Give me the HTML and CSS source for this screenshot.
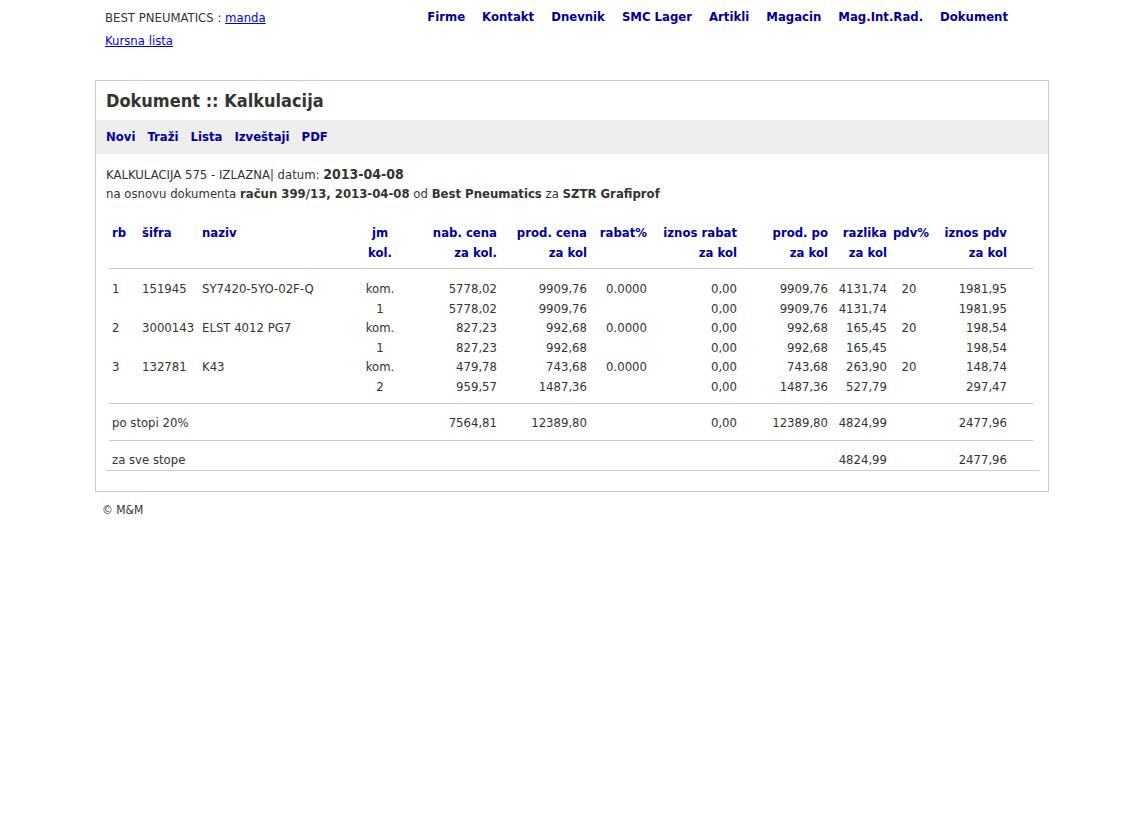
FILE: index.html
```html
<!DOCTYPE html>
<html lang="sr">
<head>
    <meta charset="UTF-8">
    <title>Dokument :: Kalkulacija</title>
    <link rel="stylesheet" href="styles.css">
</head>
<body>
    <div class="wrap">
        <header class="top">
            <div class="user">
                BEST PNEUMATICS : <a href="#">manda</a><br>
                <a href="#" class="kurs">Kursna lista</a>
            </div>
            <nav class="menu">
                <a href="#">Firme</a>
                <a href="#">Kontakt</a>
                <a href="#">Dnevnik</a>
                <a href="#">SMC Lager</a>
                <a href="#">Artikli</a>
                <a href="#">Magacin</a>
                <a href="#">Mag.Int.Rad.</a>
                <a href="#">Dokument</a>
            </nav>
        </header>

        <div class="box">
            <h1>Dokument :: Kalkulacija</h1>
            <div class="toolbar">
                <a href="#">Novi</a>
                <a href="#">Traži</a>
                <a href="#">Lista</a>
                <a href="#">Izveštaji</a>
                <a href="#">PDF</a>
            </div>

            <div class="info">
                KALKULACIJA 575 - IZLAZNA| datum: <b class="date">2013-04-08</b><br>
                na osnovu dokumenta <b>račun 399/13, 2013-04-08</b> od <b>Best Pneumatics</b> za <b>SZTR Grafiprof</b>
            </div>

            <table class="calc">
                <colgroup>
                    <col style="width:33px"><col style="width:60px"><col style="width:141px">
                    <col style="width:80px"><col style="width:80px"><col style="width:90px">
                    <col style="width:60px"><col style="width:90px"><col style="width:91px">
                    <col style="width:59px"><col style="width:38px"><col style="width:82px">
                    <col>
                </colgroup>
                <tr class="head">
                    <th>rb</th><th>šifra</th><th>naziv</th>
                    <th class="c">jm</th><th class="r">nab. cena</th><th class="r">prod. cena</th>
                    <th class="r">rabat%</th><th class="r">iznos rabat</th><th class="r">prod. po</th>
                    <th class="r">razlika</th><th class="c">pdv%</th><th class="r">iznos pdv</th><th></th>
                </tr>
                <tr class="head">
                    <th></th><th></th><th></th>
                    <th class="c">kol.</th><th class="r">za kol.</th><th class="r">za kol</th>
                    <th></th><th class="r">za kol</th><th class="r">za kol</th>
                    <th class="r">za kol</th><th></th><th class="r">za kol</th><th></th>
                </tr>
                <tr class="sep first"><td colspan="13"><div></div></td></tr>

                <tr>
                    <td>1</td><td>151945</td><td>SY7420-5YO-02F-Q</td>
                    <td class="c">kom.</td><td class="r">5778,02</td><td class="r">9909,76</td>
                    <td class="r">0.0000</td><td class="r">0,00</td><td class="r">9909,76</td>
                    <td class="r">4131,74</td><td class="c">20</td><td class="r">1981,95</td><td></td>
                </tr>
                <tr>
                    <td></td><td></td><td></td>
                    <td class="c">1</td><td class="r">5778,02</td><td class="r">9909,76</td>
                    <td></td><td class="r">0,00</td><td class="r">9909,76</td>
                    <td class="r">4131,74</td><td></td><td class="r">1981,95</td><td></td>
                </tr>
                <tr>
                    <td>2</td><td>3000143</td><td>ELST 4012 PG7</td>
                    <td class="c">kom.</td><td class="r">827,23</td><td class="r">992,68</td>
                    <td class="r">0.0000</td><td class="r">0,00</td><td class="r">992,68</td>
                    <td class="r">165,45</td><td class="c">20</td><td class="r">198,54</td><td></td>
                </tr>
                <tr>
                    <td></td><td></td><td></td>
                    <td class="c">1</td><td class="r">827,23</td><td class="r">992,68</td>
                    <td></td><td class="r">0,00</td><td class="r">992,68</td>
                    <td class="r">165,45</td><td></td><td class="r">198,54</td><td></td>
                </tr>
                <tr>
                    <td>3</td><td>132781</td><td>K43</td>
                    <td class="c">kom.</td><td class="r">479,78</td><td class="r">743,68</td>
                    <td class="r">0.0000</td><td class="r">0,00</td><td class="r">743,68</td>
                    <td class="r">263,90</td><td class="c">20</td><td class="r">148,74</td><td></td>
                </tr>
                <tr>
                    <td></td><td></td><td></td>
                    <td class="c">2</td><td class="r">959,57</td><td class="r">1487,36</td>
                    <td></td><td class="r">0,00</td><td class="r">1487,36</td>
                    <td class="r">527,79</td><td></td><td class="r">297,47</td><td></td>
                </tr>

                <tr class="sep"><td colspan="13"><div></div></td></tr>
                <tr class="total">
                    <td colspan="4">po stopi 20%</td><td class="r">7564,81</td><td class="r">12389,80</td>
                    <td></td><td class="r">0,00</td><td class="r">12389,80</td>
                    <td class="r">4824,99</td><td></td><td class="r">2477,96</td><td></td>
                </tr>
                <tr class="sep"><td colspan="13"><div></div></td></tr>
                <tr class="total last">
                    <td colspan="4">za sve stope</td><td></td><td></td>
                    <td></td><td></td><td></td>
                    <td class="r">4824,99</td><td></td><td class="r">2477,96</td><td></td>
                </tr>
            </table>
        </div>

        <div class="footer">&copy; M&amp;M</div>
    </div>
</body>
</html>
```

FILE: styles.css
```css
body {
    margin: 0;
    padding: 0;
    font-family: 'DejaVu Sans Condensed', 'DejaVu Sans', sans-serif;
    font-size: 13px;
    color: #333;
    background-color: #ffffff;
}
a {
    color: #0000ee;
}
.wrap {
    width: 954px;
    margin: 0 auto;
}
.top {
    display: flex;
    justify-content: space-between;
    padding: 9px 41px 0 10px;
    height: 80px;
    box-sizing: border-box;
}
.user {
    line-height: 23px;
    margin-top: -3px;
}
.menu {
    display: flex;
    gap: 17px;
    line-height: 16px;
}
.menu a {
    color: #000099;
    font-weight: bold;
    text-decoration: none;
}
.box {
    border: 1px solid #cccccc;
}
.box h1 {
    margin: 0;
    padding: 0 10px;
    height: 39px;
    line-height: 40px;
    font-size: 18px;
    color: #333;
}
.toolbar {
    background-color: #eeeeee;
    height: 34px;
    line-height: 34px;
    padding: 0 10px;
    display: flex;
    gap: 12px;
}
.toolbar a {
    color: #000099;
    font-weight: bold;
    text-decoration: none;
}
.info {
    padding: 11px 10px 0 10px;
    line-height: 19px;
}
.info b {
    font-weight: bold;
}
.info .date {
    font-size: 14px;
}
.calc {
    width: 933px;
    margin: 19px 0 20px 10px;
    border-collapse: collapse;
    table-layout: fixed;
    border-bottom: 1px solid #cccccc;
}
.calc th,
.calc td {
    padding: 0 3px;
    height: 19.5px;
    text-align: left;
    white-space: nowrap;
}
.calc th {
    color: #000099;
    font-weight: bold;
    height: 20px;
}
.calc th:first-child,
.calc td:first-child {
    padding-left: 6px;
}
.calc .r {
    text-align: right;
}
.calc .c {
    text-align: center;
}
.calc tr.total td {
    height: 19.5px;
}
.calc tr.total.last td {
    height: 20.5px;
}
.calc tr.sep td {
    height: 0;
    padding: 7px 6px 9px 3px;
}
.calc tr.sep.first td {
    padding-top: 6px;
    padding-bottom: 10px;
}
.calc tr.sep div {
    border-top: 1px solid #cccccc;
}
.footer {
    padding: 11px 7px;
    font-size: 12px;
}
```
